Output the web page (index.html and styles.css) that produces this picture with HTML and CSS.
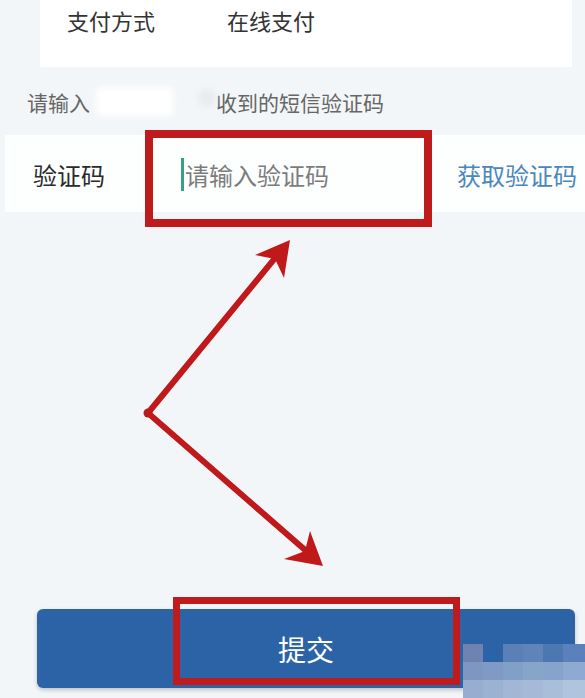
FILE: index.html
```html
<!DOCTYPE html>
<html lang="zh-CN">
<head>
<meta charset="utf-8">
<title>验证码</title>
<link rel="stylesheet" href="styles.css">
</head>
<body>
<div class="screen">
  <section class="pay-card">
    <span class="pay-label">支付方式</span>
    <span class="pay-value">在线支付</span>
  </section>

  <div class="hint">
    <span>请输入</span><span class="mask"></span><span class="smudge"></span><span>收到的短信验证码</span>
  </div>

  <div class="code-row">
    <span class="code-label">验证码</span>
    <div class="code-input"><span class="caret"></span><span class="placeholder">请输入验证码</span></div>
    <span class="get-code">获取验证码</span>
  </div>

  <button class="submit" type="button">提交</button>

  <div class="mark mark-input"></div>
  <div class="mark mark-submit"></div>

  <svg class="arrows" width="585" height="698" viewBox="0 0 585 698">
    <g stroke="#c0191c" stroke-width="6" stroke-linecap="round" fill="none">
      <line x1="148" y1="413" x2="280" y2="252"/>
      <line x1="148" y1="413" x2="312" y2="556"/>
    </g>
    <g fill="#c0191c">
      <polygon points="290,240 255,255 275,259 284,278"/>
      <polygon points="323,566 310,531 305,551 284,559"/>
      <circle cx="148" cy="413" r="4.5"/>
    </g>
  </svg>

  <div class="watermark">
    <span style="background:#6f82b2"></span><span style="background:#2c63a7"></span><span style="background:#5b80b6"></span><span style="background:#5f84b9"></span><span style="background:#4c77b1"></span><span style="background:#5a81bb"></span>
    <span style="background:#7d96c2"></span><span style="background:#7f9ac4"></span><span style="background:#80a0c7"></span><span style="background:#87a4c9"></span><span style="background:#86a3cb"></span><span style="background:#8eaad0"></span>
    <span style="background:#98add0"></span><span style="background:#9cb2d3"></span><span style="background:#a2b7d6"></span><span style="background:#a6bad7"></span><span style="background:#a9bed9"></span><span style="background:#b0c4de"></span>
  </div>
</div>
</body>
</html>
```

FILE: styles.css
```css
* { box-sizing: border-box; }

html, body {
  margin: 0;
  padding: 0;
}

body {
  font-family: "Noto Sans CJK SC", "Noto Sans", sans-serif;
  background: #f3f6f8;
}

.screen {
  position: relative;
  width: 585px;
  height: 698px;
  overflow: hidden;
  background: #f3f6f8;
}

.pay-card {
  display: flex;
  gap: 72px;
  margin-left: 40px;
  width: 532px;
  height: 67px;
  padding: 6px 0 0 27px;
  background: #ffffff;
  font-size: 22px;
  line-height: 28px;
  color: #333333;
}

.hint {
  display: flex;
  align-items: center;
  height: 68px;
  padding: 2px 0 0 27px;
  font-size: 21px;
  line-height: 28px;
  color: #666666;
}

.mask {
  display: inline-block;
  width: 76px;
  height: 28px;
  margin-left: 7px;
  background: #ffffff;
  filter: blur(3px);
}

.smudge {
  display: inline-block;
  width: 18px;
  height: 18px;
  margin: -8px 0 0 25px;
  border-radius: 50%;
  background: #e8ebed;
  filter: blur(3px);
}

.code-row {
  display: flex;
  align-items: center;
  margin-left: 5px;
  height: 77px;
  padding: 2px 8px 0 28px;
  background: #fdfefe;
  font-size: 24px;
  line-height: 32px;
}

.code-label {
  width: 148px;
  color: #2a2a2a;
}

.code-input {
  display: flex;
  align-items: center;
}

.caret {
  display: inline-block;
  width: 3px;
  height: 33px;
  background: #3a9f80;
}

.placeholder {
  margin-left: 1px;
  color: #7c7c7c;
}

.get-code {
  margin-left: auto;
  color: #4a87bd;
}

.submit {
  display: block;
  margin: 397px 0 0 37px;
  width: 538px;
  height: 79px;
  padding: 0;
  border: none;
  border-radius: 6px;
  background: #2c63a7;
  box-shadow: 0 2px 4px rgba(0, 0, 0, 0.22);
  color: #ffffff;
  font-family: "Noto Sans CJK SC", sans-serif;
  font-size: 28px;
  line-height: 36px;
}

.mark {
  position: absolute;
  border: 8px solid #bf1a1c;
}

.mark-input {
  left: 145px;
  top: 130px;
  width: 287px;
  height: 97px;
}

.mark-submit {
  left: 173px;
  top: 597px;
  width: 287px;
  height: 88px;
  border-width: 7px;
}

.arrows {
  position: absolute;
  left: 0;
  top: 0;
  pointer-events: none;
}

.watermark {
  position: absolute;
  left: 463px;
  top: 644px;
  display: grid;
  grid-template-columns: 20px 20px 20px 20px 20px 22px;
  grid-template-rows: 18px 18px 18px;
  filter: blur(0.6px);
}

.watermark span {
  display: block;
}
```
